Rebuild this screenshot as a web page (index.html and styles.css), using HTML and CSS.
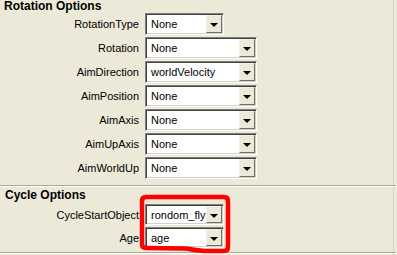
FILE: index.html
```html
<!DOCTYPE html>
<html lang="en">
<head>
  <meta charset="UTF-8" />
  <title>Rotation Options</title>
  <link rel="stylesheet" href="styles.css">
</head>
<body>

  <div class="panel">
    <!-- Rotation -->
    <div class="section-title">Rotation Options</div>
    <div class="rows">
      <label>RotationType</label>
      <div class="combo narrow"><span>None</span><i class="arrow"></i></div>
      <label>Rotation</label>
      <div class="combo"><span>None</span><i class="arrow"></i></div>
      <label>AimDirection</label>
      <div class="combo"><span>worldVelocity</span><i class="arrow"></i></div>
      <label>AimPosition</label>
      <div class="combo"><span>None</span><i class="arrow"></i></div>
      <label>AimAxis</label>
      <div class="combo"><span>None</span><i class="arrow"></i></div>
      <label>AimUpAxis</label>
      <div class="combo"><span>None</span><i class="arrow"></i></div>
      <label>AimWorldUp</label>
      <div class="combo"><span>None</span><i class="arrow"></i></div>
    </div>

    <div class="groove first"></div>

    <!-- Cycle -->
    <div class="section-title cycle">Cycle Options</div>
    <div class="rows tight">
      <label>CycleStartObject</label>
      <div class="combo narrow"><span>rondom_fly</span><i class="arrow"></i></div>
      <label>Age</label>
      <div class="combo narrow"><span>age</span><i class="arrow"></i></div>
    </div>

    <div class="groove last"></div>
  </div>

  <svg class="marker" width="397" height="255" viewBox="0 0 397 255">
    <path d="M146 197 L224 197 Q228 197 228 201 L228 247 Q228 251 224 251 L204 251 Q194 250 186 248.5 L146 248 Q142 248 142 244 L142 201 Q142 197 146 197 Z"
          fill="none" stroke="#ff0000" stroke-width="4.5" stroke-linejoin="round"/>
  </svg>

</body>
</html>
```

FILE: styles.css
```css
body {
  margin: 0;
  background: #ece9d8;
  font-family: "Liberation Sans", Arial, sans-serif;
  font-size: 11px;
  color: #000;
  position: relative;
  width: 397px;
  height: 255px;
  overflow: hidden;
}

.panel {
  width: 393px;
  height: 255px;
  border-right: 1px solid #d6d2c2;
}

.section-title {
  font-weight: bold;
  font-size: 12px;
  line-height: 13px;
  height: 13px;
  padding-left: 4px;
}

.section-title.cycle {
  margin-top: 2px;
  height: 14px;
  padding-left: 5px;
}

.rows {
  display: grid;
  grid-template-columns: 139px auto;
  grid-auto-rows: 22px;
  column-gap: 6px;
  row-gap: 2px;
  align-items: center;
}

.rows.tight {
  grid-auto-rows: 21px;
  margin-top: 1px;
}

.rows label {
  text-align: right;
  white-space: nowrap;
}

.combo {
  box-sizing: border-box;
  width: 112px;
  height: 100%;
  display: flex;
  align-items: stretch;
  background: #fff;
  border: 1px solid;
  border-color: #808080 #fff #fff #808080;
  box-shadow: inset 1px 1px #404040, inset -1px -1px #d4d0c8;
  padding: 1px;
}

.combo.narrow {
  width: 79px;
}

.combo span {
  flex: 1;
  padding-left: 4px;
  line-height: 18px;
  white-space: nowrap;
  overflow: hidden;
}

.combo .arrow {
  box-sizing: border-box;
  width: 16px;
  background: #ece9d8;
  border: 1px solid;
  border-color: #f4f2e8 #716f64 #716f64 #f4f2e8;
  position: relative;
}

.combo .arrow::after {
  content: "";
  position: absolute;
  left: 3px;
  top: 7px;
  border-left: 4px solid transparent;
  border-right: 4px solid transparent;
  border-top: 4px solid #000;
}

.groove {
  height: 1px;
  border-top: 1px solid #aca899;
  border-bottom: 1px solid #fff;
  height: 0;
  width: 396px;
}

.groove.first {
  margin-top: 6px;
}

.groove.last {
  margin-top: 4px;
}

.marker {
  position: absolute;
  left: 0;
  top: 0;
  pointer-events: none;
}
```
